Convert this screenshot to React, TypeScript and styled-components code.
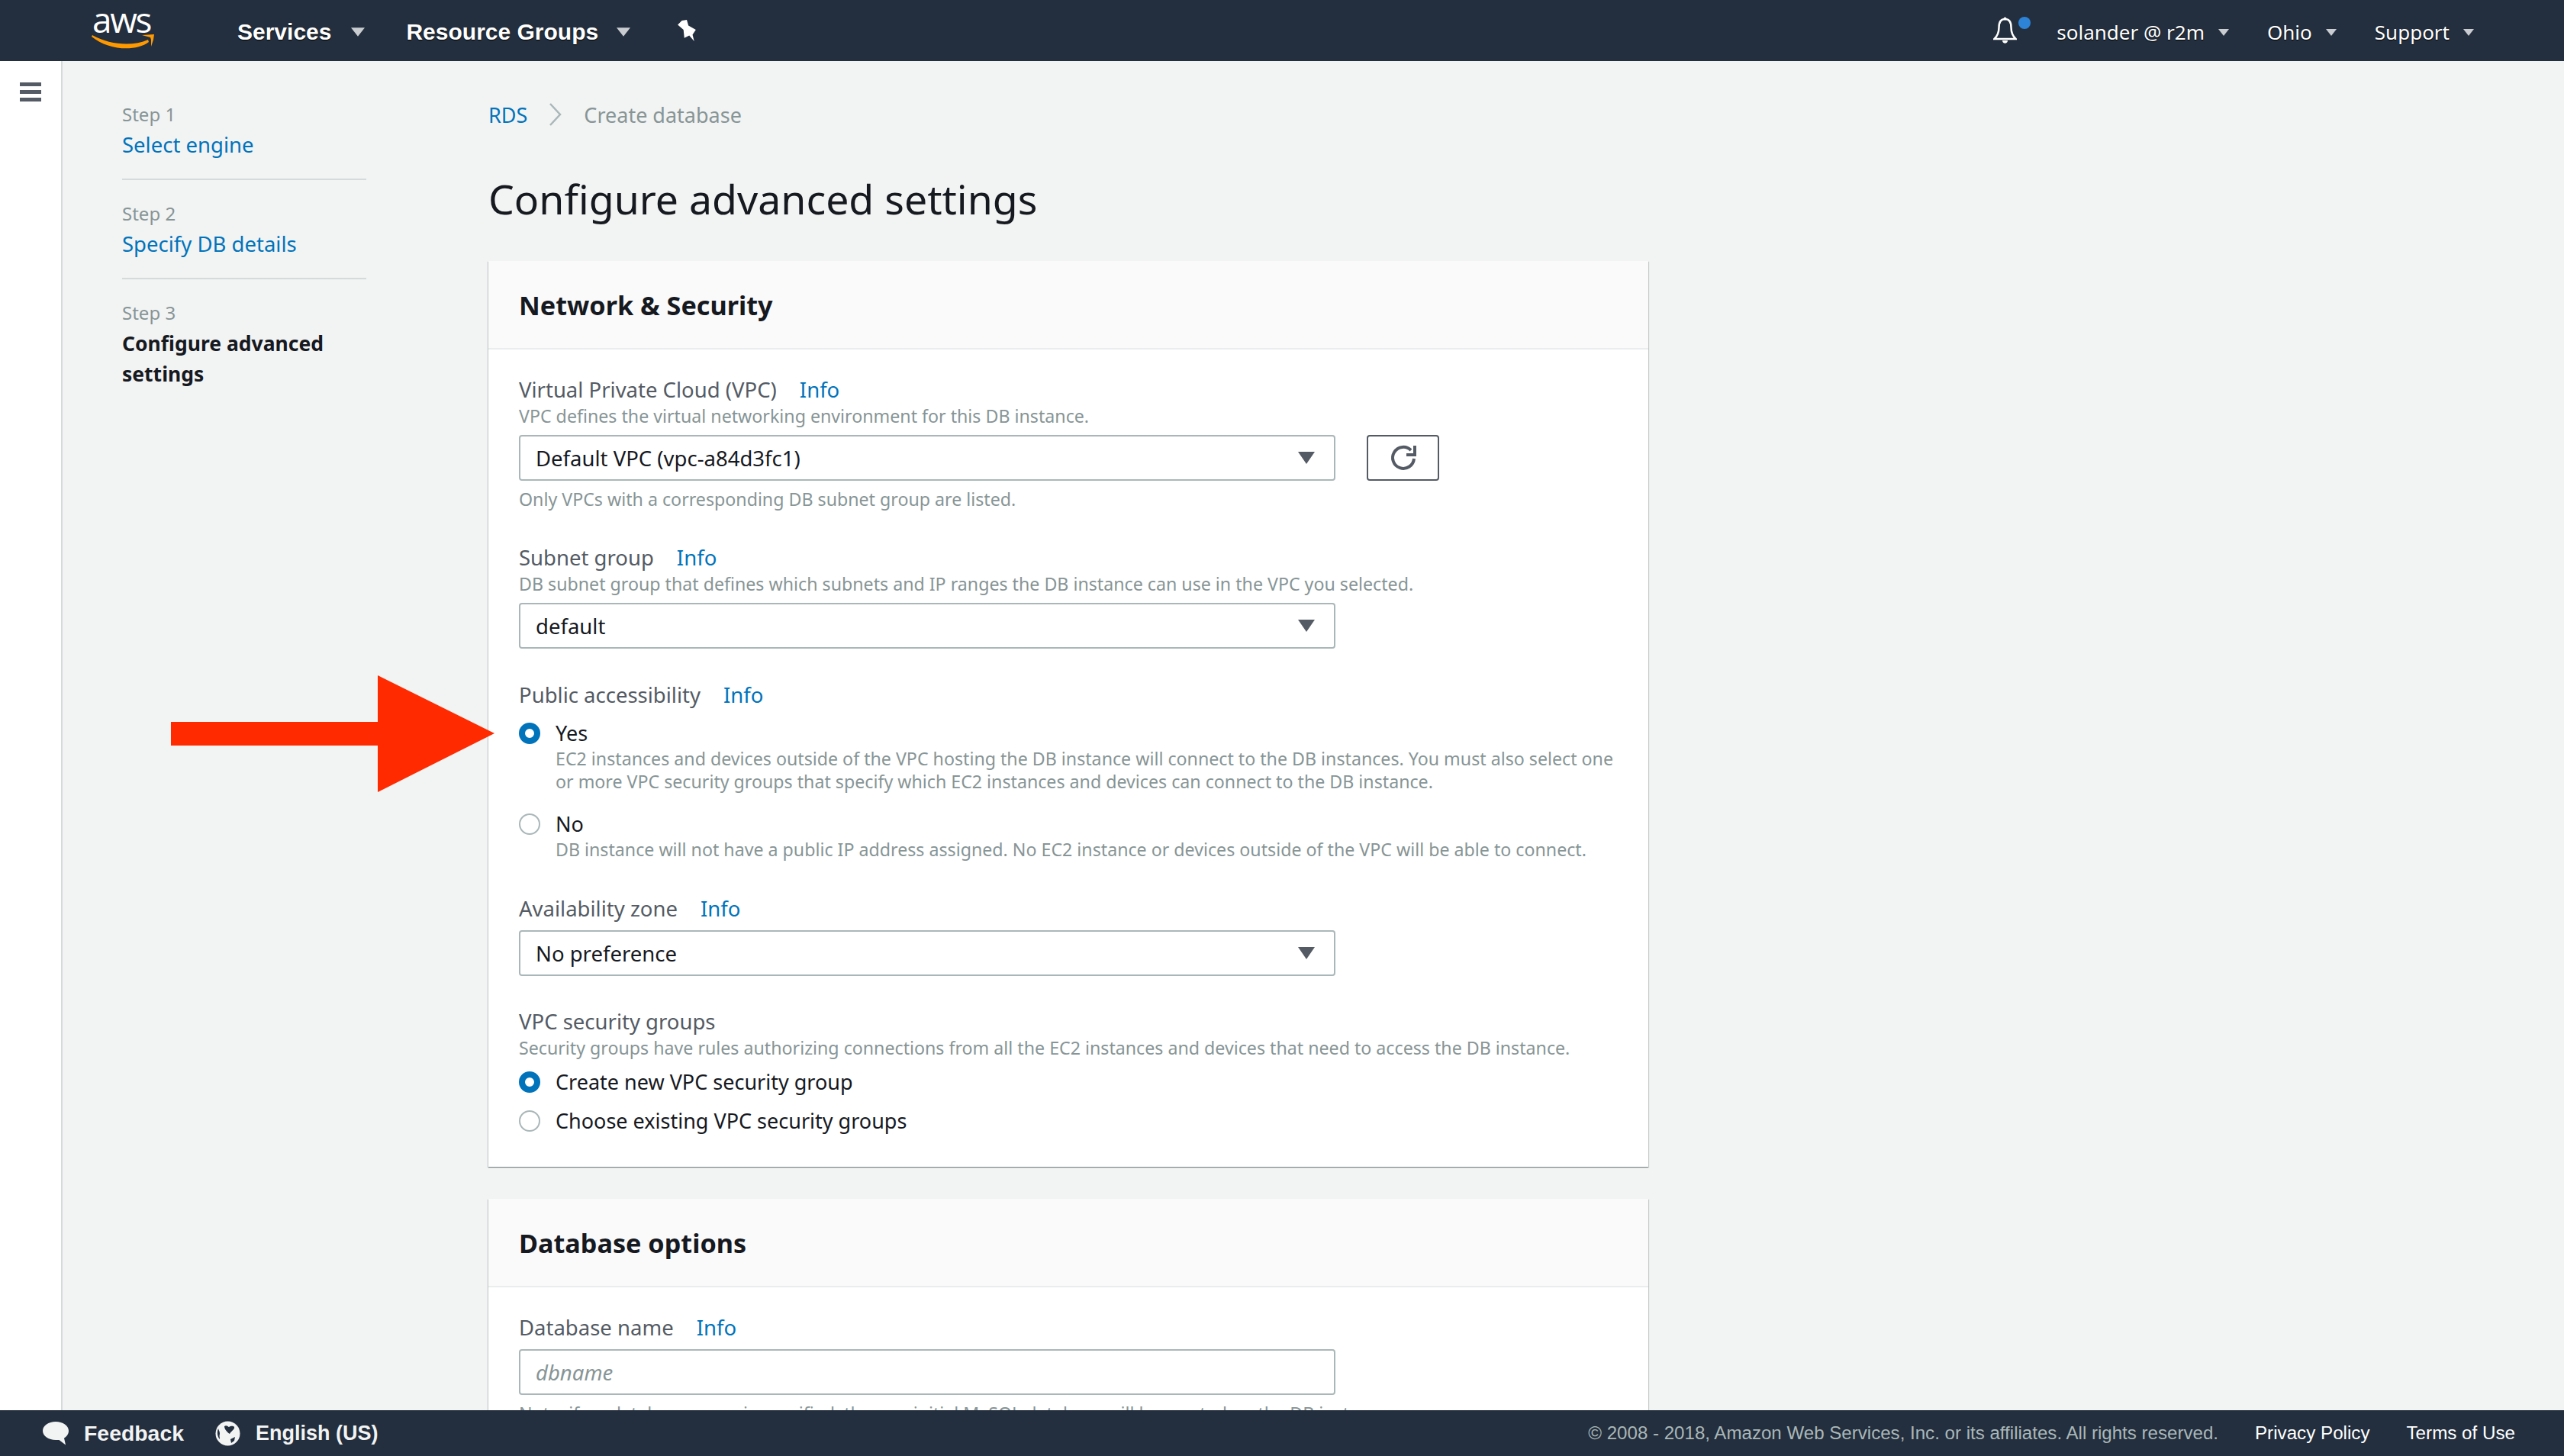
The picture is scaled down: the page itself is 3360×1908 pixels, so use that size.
import React from 'react';
import styled, { createGlobalStyle } from 'styled-components';

const UI_FONT = '"Noto Sans", "Open Sans", sans-serif';
const NAV_FONT = '"Liberation Sans", Arial, sans-serif';

const GlobalStyle = createGlobalStyle`
  html, body { margin: 0; padding: 0; height: 100%; overflow: hidden; }
  body { background: #f2f3f3; font-family: ${UI_FONT}; color: #16191f; }
  * { box-sizing: border-box; }
`;

const Page = styled.div`
  position: relative;
  display: grid;
  grid-template-rows: 80px 1fr 60px;
  height: 100vh;
  overflow: hidden;
`;

/* top bar */
const TopBar = styled.header`
  display: flex;
  align-items: center;
  background: #232f3e;
  color: #fff;
  padding: 4px 118px 0 120px;
`;

const Logo = styled.div`
  position: relative;
  width: 84px;
  height: 80px;
  margin-right: 107px;
  flex: none;
`;

const LogoWord = styled.span`
  position: absolute;
  left: 1px;
  top: -2px;
  font-family: "Open Sans", sans-serif;
  font-size: 46px;
  line-height: 50px;
  letter-spacing: -2.4px;
  color: #fff;
`;

const LogoSmile = styled.svg`
  position: absolute;
  left: 0;
  top: 42px;
`;

const NavItem = styled.span<{ $gap: number }>`
  display: inline-flex;
  align-items: center;
  gap: ${p => p.$gap}px;
  font-family: ${NAV_FONT};
  font-size: 30px;
  font-weight: 700;
  color: #fff;
  text-shadow: 0 1px 1px #000;
`;

const NavGroup = styled.div`
  display: flex;
  align-items: center;
  gap: 54px;
`;

const Pin = styled.svg`
  margin-left: 61px;
  margin-top: -4px;
`;

const RightNav = styled.div`
  display: flex;
  align-items: center;
  margin-left: auto;
`;

const BellWrap = styled.span`
  position: relative;
  display: flex;
  width: 31px;
  height: 36px;
  margin-top: -4px;
  margin-right: 52px;
`;

const BellDot = styled.span`
  position: absolute;
  right: -18px;
  top: 0;
  width: 16px;
  height: 16px;
  border-radius: 50%;
  background: #2d83d8;
`;

const UserItem = styled.span`
  display: inline-flex;
  align-items: center;
  gap: 18px;
  margin-right: 50px;
  font-family: ${UI_FONT};
  font-size: 26px;
  color: #fff;
  text-shadow: 0 1px 1px #000;
  &:last-child { margin-right: 0; }
`;

/* main */
const Body = styled.div`
  display: flex;
  min-height: 0;
  overflow: hidden;
`;

const SideRail = styled.aside`
  flex: none;
  width: 82px;
  background: #fff;
  border-right: 2px solid #d5dbdb;
  padding: 28px 0 0 26px;
`;

const Burger = styled.div`
  display: grid;
  gap: 5px;
  width: 28px;
  span { display: block; height: 5px; background: #545b64; }
`;

const Wizard = styled.nav`
  flex: none;
  width: 320px;
  margin-left: 78px;
  padding-top: 50px;
`;

const WizardStep = styled.div<{ $last?: boolean }>`
  padding-bottom: 24px;
  margin-bottom: 24px;
  border-bottom: ${p => (p.$last ? 'none' : '2px solid #d5dbdb')};
`;

const StepNo = styled.div`
  font-size: 24px;
  line-height: 40px;
  color: #879596;
`;

const StepLink = styled.a<{ $current?: boolean }>`
  display: block;
  font-size: ${p => (p.$current ? 26.5 : 27.5)}px;
  line-height: 40px;
  color: ${p => (p.$current ? '#16191f' : '#0073bb')};
  font-weight: ${p => (p.$current ? 700 : 400)};
`;

const Content = styled.main`
  flex: none;
  width: 1520px;
  margin-left: 160px;
  padding-top: 50px;
`;

const Crumbs = styled.div`
  display: flex;
  align-items: center;
  gap: 28px;
  height: 40px;
  font-size: 27px;
  color: #879596;
  a { color: #0073bb; }
`;

const Title = styled.h1`
  margin: 56px 0 0;
  font-size: 53.6px;
  font-weight: 400;
  line-height: 70px;
  color: #16191f;
`;

const Card = styled.section`
  margin-top: 42px;
  background: #fff;
  box-shadow: 0 1px 1px 0 rgba(0, 28, 36, 0.3), 1px 1px 1px 0 rgba(0, 28, 36, 0.15), -1px 1px 1px 0 rgba(0, 28, 36, 0.15);
`;

const FirstCard = styled(Card)`
  margin-top: 46px;
`;

const CardHead = styled.div`
  display: flex;
  align-items: center;
  height: 116px;
  padding: 0 40px;
  background: #fafafa;
  border-bottom: 2px solid #eaeded;
  font-size: 34.2px;
  font-weight: 700;
  color: #16191f;
`;

const CardBody = styled.div`
  padding: 35px 40px 42px;
`;

const Field = styled.div<{ $top?: number }>`
  margin-top: ${p => p.$top ?? 0}px;
`;

const Label = styled.div`
  display: flex;
  gap: 30px;
  margin-bottom: 1px;
  font-size: 27.5px;
  line-height: 36px;
  color: #545b64;
  a { color: #0073bb; }
`;

const Desc = styled.div`
  font-size: 23.2px;
  line-height: 30px;
  color: #879596;
`;

const SelectRow = styled.div`
  display: flex;
  align-items: center;
  gap: 41px;
  margin-top: 10px;
`;

const SelectBox = styled.div`
  position: relative;
  display: flex;
  align-items: center;
  width: 1070px;
  height: 60px;
  padding: 0 20px;
  background: #fff;
  border: 2px solid #aab7b8;
  border-radius: 4px;
  font-size: 27.5px;
  color: #16191f;
`;

const SelectArrow = styled.span`
  position: absolute;
  right: 25px;
  top: 20px;
  width: 0;
  height: 0;
  border-left: 11px solid transparent;
  border-right: 11px solid transparent;
  border-top: 16px solid #545b64;
`;

const IconButton = styled.button`
  display: flex;
  align-items: center;
  justify-content: center;
  width: 95px;
  height: 60px;
  padding: 0;
  background: #fff;
  border: 2px solid #545b64;
  border-radius: 4px;
`;

const Hint = styled.div`
  margin-top: 9px;
  font-size: 23.2px;
  line-height: 30px;
  color: #879596;
`;

const RadioRow = styled.div<{ $top?: number }>`
  display: flex;
  align-items: flex-start;
  gap: 20px;
  margin-top: ${p => p.$top ?? 0}px;
`;

const RadioDot = styled.span<{ $on?: boolean }>`
  flex: none;
  width: 28px;
  height: 28px;
  margin-top: 4px;
  border-radius: 50%;
  background: #fff;
  border: ${p => (p.$on ? '8px solid #0073bb' : '2px solid #aab7b8')};
`;

const RadioText = styled.div`
  font-size: 27px;
  line-height: 36px;
  color: #16191f;
`;

const TextBox = styled(SelectBox)`
  margin-top: 10px;
  font-style: italic;
  color: #879596;
`;

/* footer */
const BottomBar = styled.footer`
  position: relative;
  z-index: 2;
  display: flex;
  align-items: center;
  padding: 0 64px 0 56px;
  background: #232f3e;
  font-family: ${NAV_FONT};
`;

const FootLeft = styled.span<{ $gap: number; $after: number; $size: number }>`
  display: inline-flex;
  align-items: center;
  gap: ${p => p.$gap}px;
  margin-right: ${p => p.$after}px;
  font-size: ${p => p.$size}px;
  font-weight: 700;
  color: #f2f3f3;
`;

const Copy = styled.span`
  margin-left: auto;
  font-size: 24.1px;
  color: #aab7b8;
`;

const FootLink = styled.a<{ $gap: number }>`
  margin-left: ${p => p.$gap}px;
  font-size: 24.2px;
  color: #fff;
`;

const Callout = styled.svg`
  position: absolute;
  left: 224px;
  top: 885px;
`;

const Caret = ({ size = 14, color = '#c9cdd1' }: { size?: number; color?: string }) => (
  <svg width={size} height={Math.round(size * 0.65)} viewBox="0 0 14 9">
    <path d="M0 0h14L7 9z" fill={color} />
  </svg>
);

const App = () => {
  return (
    <Page>
      <GlobalStyle />
      <TopBar>
        <Logo>
          <LogoWord>aws</LogoWord>
          <LogoSmile width="84" height="22" viewBox="0 0 84 22">
            <path d="M0 4C22 22 58 24 75 11l-1-3C54 17 24 15 1 2z" fill="#f90" />
            <path d="M66 2l16-1-1 7-3 9 0-9-1-3z" fill="#f90" />
          </LogoSmile>
        </Logo>
        <NavGroup>
          <NavItem $gap={26}>Services <Caret size={18} /></NavItem>
          <NavItem $gap={24}>Resource Groups <Caret size={18} /></NavItem>
        </NavGroup>
        <Pin width="26" height="28" viewBox="0 0 24 26">
          <path d="M6 1l6-1 2 7 9 5-4 6 2 8-6-7-6 3-1-10-7-6z" fill="#fff" />
        </Pin>
        <RightNav>
          <BellWrap>
            <svg width="31" height="36" viewBox="0 0 31 36">
              <path d="M15.500 3c6 0 8 5 8 11 0 7 2 11 6 15H1.500c4-4 6-8 6-15 0-6 2-11 8-11z" fill="none" stroke="#fff" strokeWidth="2.500" />
              <path d="M12 31c0 5 7 5 7 0z" fill="#fff" />
              <circle cx="15.500" cy="2.500" r="2" fill="#fff" />
            </svg>
            <BellDot />
          </BellWrap>
          <UserItem>solander @ r2m <Caret /></UserItem>
          <UserItem>Ohio <Caret /></UserItem>
          <UserItem>Support <Caret /></UserItem>
        </RightNav>
      </TopBar>

      <Body>
        <SideRail>
          <Burger><span /><span /><span /></Burger>
        </SideRail>
        <Wizard>
          <WizardStep>
            <StepNo>Step 1</StepNo>
            <StepLink>Select engine</StepLink>
          </WizardStep>
          <WizardStep>
            <StepNo>Step 2</StepNo>
            <StepLink>Specify DB details</StepLink>
          </WizardStep>
          <WizardStep $last>
            <StepNo>Step 3</StepNo>
            <StepLink $current>Configure advanced settings</StepLink>
          </WizardStep>
        </Wizard>
        <Content>
          <Crumbs>
            <a>RDS</a>
            <svg width="18" height="30" viewBox="0 0 18 30">
              <path d="M2 1l13 14L2 29" fill="none" stroke="#aab7b8" strokeWidth="2.500" />
            </svg>
            <span>Create database</span>
          </Crumbs>
          <Title>Configure advanced settings</Title>
          <FirstCard>
            <CardHead>Network &amp; Security</CardHead>
            <CardBody>
              <Field>
                <Label>Virtual Private Cloud (VPC) <a>Info</a></Label>
                <Desc>VPC defines the virtual networking environment for this DB instance.</Desc>
                <SelectRow>
                  <SelectBox>Default VPC (vpc-a84d3fc1)<SelectArrow /></SelectBox>
                  <IconButton>
                    <svg width="36" height="36" viewBox="0 0 36 36">
                      <path d="M28 8A14 14 0 1 0 32 19" fill="none" stroke="#545b64" strokeWidth="4" />
                      <path d="M33 2v12H22" fill="none" stroke="#545b64" strokeWidth="4" />
                    </svg>
                  </IconButton>
                </SelectRow>
                <Hint>Only VPCs with a corresponding DB subnet group are listed.</Hint>
              </Field>
              <Field $top={44}>
                <Label>Subnet group <a>Info</a></Label>
                <Desc>DB subnet group that defines which subnets and IP ranges the DB instance can use in the VPC you selected.</Desc>
                <SelectRow>
                  <SelectBox>default<SelectArrow /></SelectBox>
                </SelectRow>
              </Field>
              <Field $top={43}>
                <Label>Public accessibility <a>Info</a></Label>
                <RadioRow $top={14}>
                  <RadioDot $on />
                  <div>
                    <RadioText>Yes</RadioText>
                    <Desc>EC2 instances and devices outside of the VPC hosting the DB instance will connect to the DB instances. You must also select one or more VPC security groups that specify which EC2 instances and devices can connect to the DB instance.</Desc>
                  </div>
                </RadioRow>
                <RadioRow $top={23}>
                  <RadioDot />
                  <div>
                    <RadioText>No</RadioText>
                    <Desc>DB instance will not have a public IP address assigned. No EC2 instance or devices outside of the VPC will be able to connect.</Desc>
                  </div>
                </RadioRow>
              </Field>
              <Field $top={45}>
                <Label>Availability zone <a>Info</a></Label>
                <SelectRow>
                  <SelectBox>No preference<SelectArrow /></SelectBox>
                </SelectRow>
              </Field>
              <Field $top={42}>
                <Label>VPC security groups</Label>
                <Desc>Security groups have rules authorizing connections from all the EC2 instances and devices that need to access the DB instance.</Desc>
                <RadioRow $top={12}>
                  <RadioDot $on />
                  <RadioText>Create new VPC security group</RadioText>
                </RadioRow>
                <RadioRow $top={15}>
                  <RadioDot />
                  <RadioText>Choose existing VPC security groups</RadioText>
                </RadioRow>
              </Field>
            </CardBody>
          </FirstCard>
          <Card>
            <CardHead>Database options</CardHead>
            <CardBody>
              <Field>
                <Label>Database name <a>Info</a></Label>
                <TextBox>dbname</TextBox>
                <Hint>Note: if no database name is specified, then no initial MySQL database will be created on the DB instance.</Hint>
              </Field>
            </CardBody>
          </Card>
        </Content>
      </Body>

      <BottomBar>
        <FootLeft $gap={20} $after={41} $size={28.4}>
          <svg width="34" height="31" viewBox="0 0 34 31">
            <path d="M17 0c9.400 0 17 5.400 17 12 0 4-2.500 7.400-6 9.500l2 9-8.500-6.600c-1.400.1-3 .1-4.500.1C7.600 24 0 18.600 0 12S7.600 0 17 0z" fill="#f2f3f3" />
          </svg>
          Feedback
        </FootLeft>
        <FootLeft $gap={20} $after={0} $size={27}>
          <svg width="33" height="33" viewBox="0 0 33 33">
            <circle cx="16.500" cy="16.500" r="16" fill="#f2f3f3" />
            <path d="M12 7c3-2 5 1 6 1 2-1 5-2 7 0 1 3-5 6-6 9-3-2-7-6-7-10zM4 10c-2 5-1 11 2 14 0-3-1-4 0-7 0-3-1-4-2-7zM20 24l6-3-1 5-4 3z" fill="#232f3e" />
          </svg>
          English (US)
        </FootLeft>
        <Copy>© 2008 - 2018, Amazon Web Services, Inc. or its affiliates. All rights reserved.</Copy>
        <FootLink $gap={48}>Privacy Policy</FootLink>
        <FootLink $gap={48}>Terms of Use</FootLink>
      </BottomBar>

      <Callout width="424" height="153" viewBox="0 0 424 153">
        <path d="M0 61h271V0l153 76-153 77V92H0z" fill="#ff2a00" />
      </Callout>
    </Page>
  );
};

export default App;
